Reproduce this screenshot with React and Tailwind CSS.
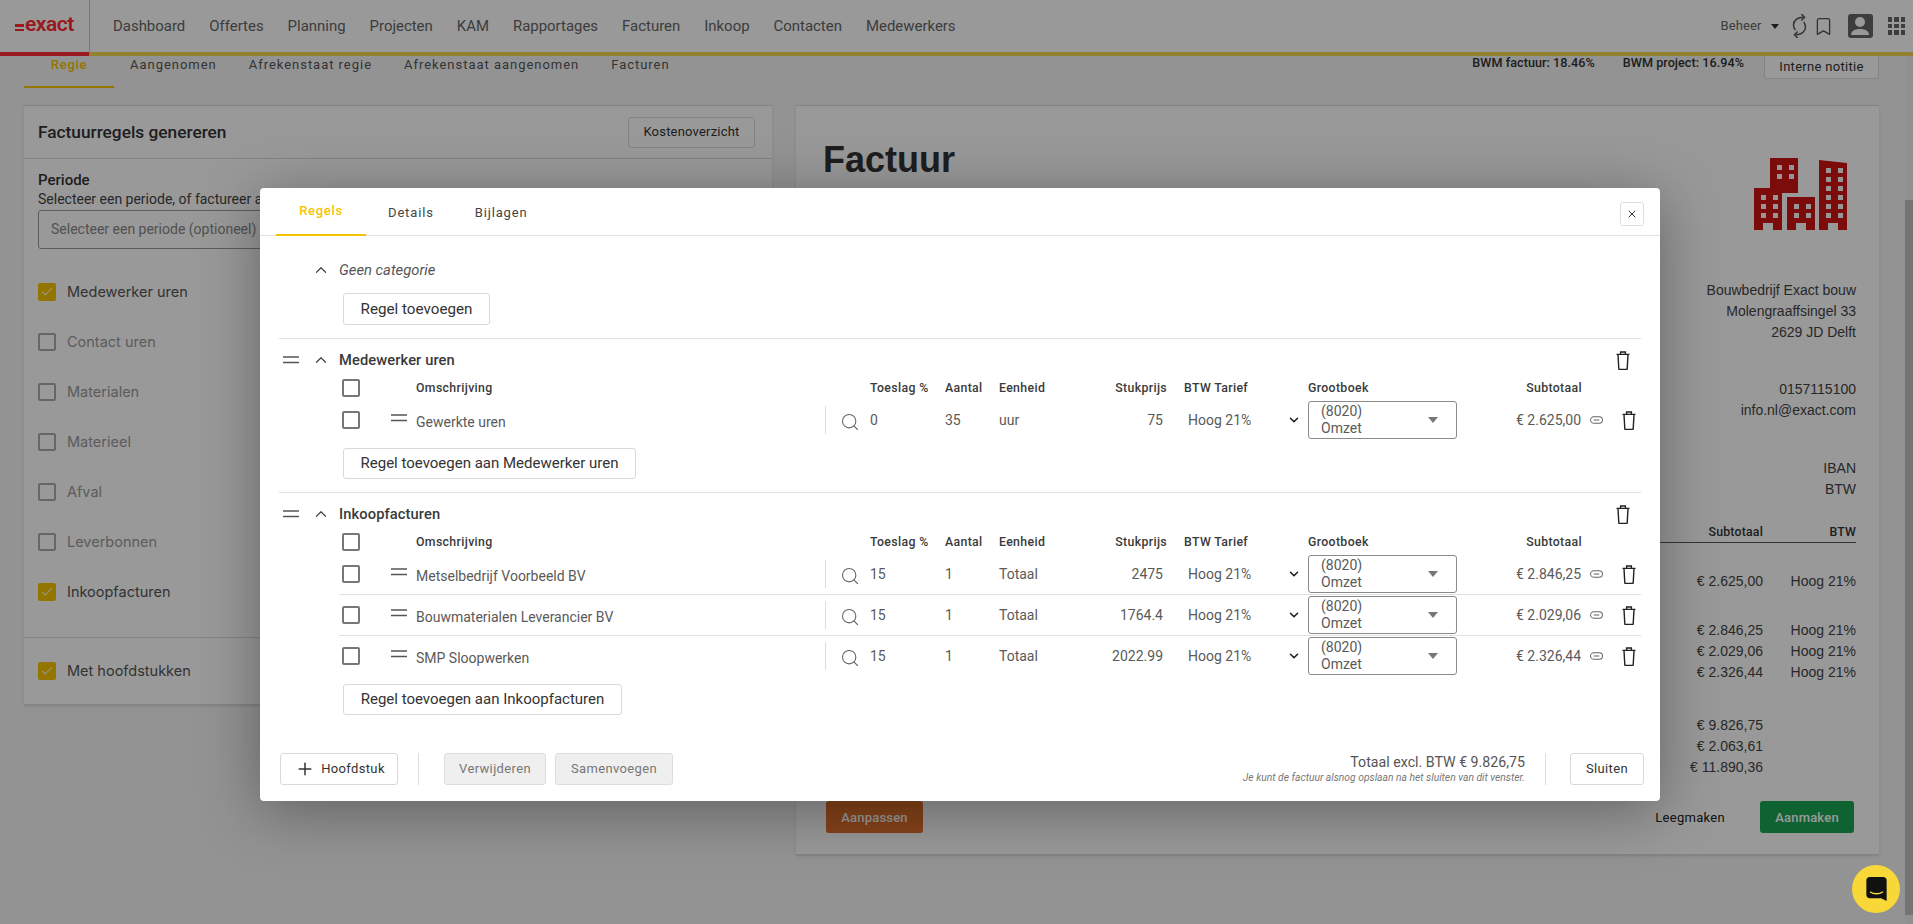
import React from 'react';
import { Search, ChevronUp, ChevronDown, Plus, Bookmark, Check, X } from 'lucide-react';

const Drag = ({ className = '' }) => (
  <svg viewBox="0 0 16 8" className={`w-4 h-2 ${className}`}><path d="M0 1h16M0 6.500h16" stroke="#555" strokeWidth="1.7" fill="none" /></svg>
);
const Trash = ({ className = '' }) => (
  <svg viewBox="0 0 14 19" className={`w-[14px] h-[19px] ${className}`} fill="none" stroke="#222" strokeWidth="1.4">
    <path d="M0.500 3.400h13M4.600 3.200V1h4.800v2.200M2 3.600l0.800 14.200c0 .4.300.7.700.7h7c.4 0 .7-.3.700-.7L12 3.600" />
  </svg>
);
const LinkIcon = () => (
  <svg viewBox="0 0 14 8" className="w-[13px] h-2" fill="none" stroke="#666" strokeWidth="1.1">
    <rect x="0.600" y="0.600" width="12.800" height="6.800" rx="3.400" /><path d="M4 4h6" />
  </svg>
);
const Caret = () => (
  <svg viewBox="0 0 10 6" className="w-[10px] h-[6px]"><path d="M0 0h10L5 6z" fill="#777" /></svg>
);
const Cb = ({ checked, dim }) => (
  checked ? (
    <span className="w-[18px] h-[18px] rounded-[2px] bg-[#f5c400] flex items-center justify-center shrink-0"><Check size={14} color="#fff" strokeWidth={1.8} /></span>
  ) : (
    <span className={`w-[18px] h-[18px] rounded-[2px] border-2 shrink-0 ${dim ? 'border-[#aaa]' : 'border-[#777]'}`} />
  )
);
const RowCb = () => <span className="block ml-[3px] w-[18px] h-[18px] rounded-[2px] border-2 border-[#777]" />;

const Btn = ({ children, className = '' }) => (
  <button className={`h-[31px] border border-[#d9d9d9] rounded-[3px] bg-white text-[#333] flex items-center justify-center ${className}`}>{children}</button>
);

const GRID = 'grid grid-cols-[52px_25px_409px_45px_75px_54px_53px_115px_141px_149px_125px_59px] items-center';

const Header = () => (
  <div className={`${GRID} h-6 mt-[3px] text-[12.3px] font-medium tracking-[0.35px] text-[#3a3a3a] ml-[60px]`}>
    <RowCb />
    <span />
    <span>Omschrijving</span>
    <span />
    <span>Toeslag %</span>
    <span>Aantal</span>
    <span>Eenheid</span>
    <span className="text-right">Stukprijs</span>
    <span className="pl-[17px]">BTW Tarief</span>
    <span>Grootboek</span>
    <span className="text-right">Subtotaal</span>
    <span />
  </div>
);

const Row = ({ name, toeslag, aantal, eenheid, prijs, sub, last }) => (
  <div className={`${GRID} ml-[60px] text-[14px] text-[#5a5a5a] ${last ? 'h-10' : 'h-[41px] border-b border-[#e0e0e0]'}`}>
    <RowCb />
    <Drag className="-mt-1" />
    <span className="mt-1">{name}</span>
    <span className="h-7 border-l border-[#ddd] flex items-center pl-[14px]"><Search size={20} strokeWidth={1.3} color="#666" className="mt-1" /></span>
    <span>{toeslag}</span>
    <span>{aantal}</span>
    <span>{eenheid}</span>
    <span className="text-right pr-1">{prijs}</span>
    <span className="pl-[21px] pr-[7px] flex items-center justify-between">Hoog 21%<ChevronDown size={14} strokeWidth={2.8} color="#222" /></span>
    <span className="h-[38px] border border-[#8a8a8a] rounded-[3px] pl-3 pr-[18px] flex items-center justify-between leading-[17px]"><span className="block w-12">(8020) Omzet</span><Caret /></span>
    <span className="text-right pr-px">{sub}</span>
    <span className="flex items-center justify-between pl-2 pr-[5px]"><LinkIcon /><Trash /></span>
  </div>
);

const Section = ({ title, rows, addLabel, w }) => (
  <div className="border-t border-[#e0e0e0] pt-2 pb-[13px]">
    <div className="h-[26px] flex items-center text-[14.7px] font-medium text-[#3a3a3a] tracking-[0.1px]">
      <Drag className="ml-1" />
      <ChevronUp size={18} strokeWidth={1.6} color="#444" className="ml-[13px] mr-[9px]" />
      <span className="flex-1">{title}</span>
      <Trash className="mr-[11px] h-4 w-3" />
    </div>
    <Header />
    {rows.map((r, i) => <Row key={i} {...r} last={i === rows.length - 1} />)}
    <Btn className={`mt-2 ml-[64px] text-[15px] ${w}`}>{addLabel}</Btn>
  </div>
);

const NAV = ['Dashboard', 'Offertes', 'Planning', 'Projecten', 'KAM', 'Rapportages', 'Facturen', 'Inkoop', 'Contacten', 'Medewerkers'];
const LEFT = [['Medewerker uren', true], ['Contact uren'], ['Materialen'], ['Materieel'], ['Afval'], ['Leverbonnen'], ['Inkoopfacturen', true]];

const Building = () => (
  <svg viewBox="0 0 93 73" className="w-[93px] h-[73px] mr-[9px] mt-5">
    <path d="M16 0h28v35H28V30H16zM0 30h28v42h-9v-7h-10v7H0zM33 39h28v33h-9v-7H42v7h-9zM65 2l28 3v67h-9v-7H74v7h-9z" fill="#cf1414" />
    <g fill="#fbfbfb">
      {[[23, 7], [35, 7], [23, 16], [35, 16]].map(([x, y]) => <rect key={`a${x}${y}`} x={x} y={y} width="5" height="5" />)}
      {[7, 19].flatMap(x => [37, 46, 55].map(y => <rect key={`b${x}${y}`} x={x} y={y} width="5" height="5" />))}
      {[40, 52].flatMap(x => [46, 55].map(y => <rect key={`c${x}${y}`} x={x} y={y} width="5" height="5" />))}
      {[72, 84].flatMap(x => [10, 19, 28, 37, 46, 55].map(y => <rect key={`d${x}${y}`} x={x} y={y} width="5" height="5" />))}
    </g>
  </svg>
);

export default function App() {
  return (
    <div className="relative h-[924px] w-full overflow-hidden bg-[#f5f5f5] font-['Roboto',sans-serif] text-[#333]">
      {/* Nav */}
      <header className="h-[56px] bg-white flex border-b-4 border-[#f5d750]">
        <div className="w-[89px] h-[56px] -mb-1 border-b-4 border-[#ff2b32] flex items-center pl-[15px] relative">
          <span className="flex flex-col gap-[2px] mr-[1px] mt-[3px]"><i className="block w-[9px] h-[2.500px] bg-[#ff2b32]" /><i className="block w-[9px] h-[2.500px] bg-[#ff2b32]" /></span>
          <span className="font-semibold text-[21px] tracking-[-0.5px] text-[#ff2b32] leading-none -mt-[3px]">exact</span>
        </div>
        <div className="h-[52px] border-l border-[#ccc]" />
        <nav className="flex items-center gap-6 pl-[23px] text-[14.95px] text-[#666] flex-1">
          {NAV.map(n => <span key={n}>{n}</span>)}
        </nav>
        <div className="flex items-center text-[#666] pr-2 h-[52px]">
          <span className="text-[13px] tracking-[0.1px]">Beheer</span>
          <span className="ml-[9px] w-0 h-0 border-x-4 border-x-transparent border-t-[5px] border-t-[#333]" />
          <svg viewBox="0 0 16 26" className="ml-[13px] w-[15px] h-[24px]" fill="none" stroke="#555" strokeWidth="1.600">
            <path d="M12 3.500C6 3.500 1.500 7 1.500 12c0 2.200.8 4 2 5.500M4 22.500c6 0 10.500-3.500 10.500-8.500 0-2.200-.8-4-2-5.500" />
            <path d="M10 0l3.500 3.500L10 7M6 19l-3.500 3.500L6 26" />
          </svg>
          <Bookmark size={21} strokeWidth={1.5} color="#555" className="ml-[6px]" />
          <span className="ml-[14px] w-[25px] h-6 rounded-[3px] bg-[#666] flex items-end justify-center overflow-hidden">
            <svg viewBox="0 0 24 24" className="w-6 h-6"><circle cx="12" cy="8" r="5" fill="#fff" /><path d="M3 21c0-4 4-6 9-6s9 2 9 6z" fill="#fff" /></svg>
          </span>
          <span className="ml-[15px] grid grid-cols-3 gap-[2px]">
            {Array.from({ length: 9 }).map((_, i) => <i key={i} className="block w-[4.500px] h-[4.500px] bg-[#666]" />)}
          </span>
        </div>
      </header>

      <div className="flex h-[868px]">
        <main className="flex-1 px-6 overflow-hidden">
          {/* Subnav */}
          <div className="h-[49px] flex items-start pr-[2px]">
            <div className="h-[32px] w-[90px] border-b-2 border-[#f5c400] flex justify-center text-[13px] font-medium tracking-[0.7px] text-[#f5c400] leading-[18px]">Regie</div>
            <div className="flex gap-[32px] pl-4 text-[13px] tracking-[0.97px] text-[#555] leading-[18px]">
              <span>Aangenomen</span><span>Afrekenstaat regie</span><span>Afrekenstaat aangenomen</span><span>Facturen</span>
            </div>
            <div className="ml-auto flex items-start text-[12.6px] font-medium tracking-[0.05px] text-[#333] leading-[14px]">
              <span>BWM factuur: 18.46%</span>
              <span className="ml-7">BWM project: 16.94%</span>
              <span className="ml-5 w-[115px] h-[23px] border border-t-0 border-[#ddd] rounded-b-[3px] bg-white flex items-center justify-center text-[13px] font-normal tracking-[0.3px]">Interne notitie</span>
            </div>
          </div>

          <div className="flex gap-6 items-start">
            {/* Left card */}
            <section className="w-[748px] h-[600px] bg-white border-t border-[#ddd] border-b shadow-sm">
              <div className="h-[53px] flex items-center justify-between pl-[14px] pr-[17px] border-b border-[#ddd]">
                <h2 className="text-[17.3px] font-medium mt-[2px]">Factuurregels genereren</h2>
                <button className="w-[127px] h-[31px] border border-[#ddd] rounded-[3px] text-[13px] tracking-[0.2px]">Kostenoverzicht</button>
              </div>
              <div className="px-[14px] pt-[12px]">
                <div className="text-[15px] font-medium leading-[19px]">Periode</div>
                <div className="text-[14px] leading-[19px] text-[#444]">Selecteer een periode, of factureer alle regels</div>
                <div className="mt-[1px] h-[39px] border border-[#999] rounded-[3px] flex items-center pl-3 text-[14px] text-[#888]">Selecteer een periode (optioneel)</div>
                <div className="mt-[34px] flex flex-col gap-8">
                  {LEFT.map(([t, c]) => (
                    <div key={t} className={`flex items-center gap-[11px] h-[18px] text-[14.5px] font-['Inter',sans-serif] ${c ? 'text-[#555]' : 'text-[#999]'}`}><Cb checked={c} dim />{t}</div>
                  ))}
                </div>
              </div>
              <div className="mt-[36px] border-t border-[#ddd] pt-[24px] pl-[14px]">
                <div className="flex items-center gap-[11px] h-[18px] text-[14.5px] font-['Inter',sans-serif] text-[#555]"><Cb checked />Met hoofdstukken</div>
              </div>
            </section>

            {/* Right card */}
            <section className="w-[1083px] h-[750px] bg-white border-t border-b border-[#ddd] shadow-sm pl-[27px] pr-[23px] font-['Liberation_Sans',sans-serif] text-[14px] text-[#444] leading-[21px] flex flex-col">
              <div className="flex justify-between items-start pt-[32px]">
                <h1 className="text-[36px] font-bold leading-[44px] text-[#333]">Factuur</h1>
                <Building />
              </div>
              <div className="text-right mt-[49px]">
                <p>Bouwbedrijf Exact bouw</p><p>Molengraaffsingel 33</p><p>2629 JD Delft</p>
                <p className="mt-[36px]">0157115100</p><p>info.nl@exact.com</p>
                <p className="mt-[37px]">IBAN</p><p>BTW</p>
              </div>
              <div className="mt-[22px] flex border-b border-[#555] h-[21px] text-[12.3px] font-medium tracking-[0.2px] font-['Roboto',sans-serif] text-[#333] justify-end">
                <span>Subtotaal</span><span className="w-[93px] text-right">BTW</span>
              </div>
              <div className="mt-[28px] flex justify-end"><span>€ 2.625,00</span><span className="w-[93px] text-right">Hoog 21%</span></div>
              <div className="mt-[28px] flex justify-end"><span>€ 2.846,25</span><span className="w-[93px] text-right">Hoog 21%</span></div>
              <div className="flex justify-end"><span>€ 2.029,06</span><span className="w-[93px] text-right">Hoog 21%</span></div>
              <div className="flex justify-end"><span>€ 2.326,44</span><span className="w-[93px] text-right">Hoog 21%</span></div>
              <div className="mt-[32px] flex justify-end pr-[93px]">€ 9.826,75</div>
              <div className="flex justify-end pr-[93px]">€ 2.063,61</div>
              <div className="flex justify-end pr-[93px]">€ 11.890,36</div>
              <div className="mt-[23px] flex items-center font-['Roboto',sans-serif] text-[13px]">
                <button className="w-[97px] h-8 rounded-[3px] bg-[#e0702a] text-white tracking-[0.2px] font-medium ml-[3px]">Aanpassen</button>
                <span className="ml-auto tracking-[0.3px] text-[#222]">Leegmaken</span>
                <button className="ml-[35px] w-[94px] h-8 rounded-[3px] bg-[#1aa552] text-white tracking-[0.2px] font-medium mr-[2px]">Aanmaken</button>
              </div>
            </section>
          </div>
        </main>
        {/* Scrollbar */}
        <div className="w-2 bg-[#f1f1f1] flex flex-col pt-[144px]"><div className="h-[715px] bg-[#c1c1c1]" /></div>
      </div>

      {/* Overlay */}
      <div className="absolute inset-0 bg-black/40 pt-[188px] pl-[260px]">
        <div className="w-[1400px] h-[613px] bg-white rounded-[4px] shadow-[0_10px_60px_rgba(0,0,0,0.35)] flex flex-col">
          {/* Tabs */}
          <div className="h-[48px] flex items-end border-b border-[#e0e0e0] pl-4 relative shrink-0">
            <div className="w-[90px] h-[48px] border-b-2 border-[#f5c400] -mb-px flex items-center justify-center text-[13px] font-medium tracking-[0.7px] text-[#f5c400]">Regels</div>
            <div className="h-[47px] pt-[2px] flex items-center gap-[41px] pl-[22px] text-[13px] tracking-[0.85px] text-[#444]"><span>Details</span><span>Bijlagen</span></div>
            <button className="ml-auto mr-[16px] mb-[9px] w-6 h-6 border border-[#ddd] rounded-[3px] flex items-center justify-center"><X size={12} color="#333" strokeWidth={2} /></button>
          </div>

          <div className="flex-1 px-[19px]">
            <div className="h-[32px] flex items-center mt-[18px] -mb-px text-[14.8px] italic text-[#555]">
              <ChevronUp size={18} strokeWidth={1.6} color="#444" className="ml-[33px] mr-[9px]" />Geen categorie
            </div>
            <Btn className="mt-[8px] ml-[64px] w-[147px] h-[32px] text-[15.2px]">Regel toevoegen</Btn>
            <div className="h-[13px]" />
            <Section
              title="Medewerker uren"
              addLabel="Regel toevoegen aan Medewerker uren"
              w="w-[293px]"
              rows={[{ name: 'Gewerkte uren', toeslag: '0', aantal: '35', eenheid: 'uur', prijs: '75', sub: '€ 2.625,00' }]}
            />
            <Section
              title="Inkoopfacturen"
              addLabel="Regel toevoegen aan Inkoopfacturen"
              w="w-[279px]"
              rows={[
                { name: 'Metselbedrijf Voorbeeld BV', toeslag: '15', aantal: '1', eenheid: 'Totaal', prijs: '2475', sub: '€ 2.846,25' },
                { name: 'Bouwmaterialen Leverancier BV', toeslag: '15', aantal: '1', eenheid: 'Totaal', prijs: '1764.4', sub: '€ 2.029,06' },
                { name: 'SMP Sloopwerken', toeslag: '15', aantal: '1', eenheid: 'Totaal', prijs: '2022.99', sub: '€ 2.326,44' },
              ]}
            />
          </div>

          {/* Footer */}
          <div className="h-[48px] shrink-0 flex items-start pl-[20px] pr-[16px]">
            <button className="w-[118px] h-8 border border-[#d9d9d9] rounded-[3px] flex items-center justify-center text-[13px] tracking-[0.35px] text-[#333] pl-[2px]"><Plus size={20} strokeWidth={1.8} className="mr-[6px]" />Hoofdstuk</button>
            <span className="h-8 border-l border-[#ddd] ml-5" />
            <button className="ml-[25px] w-[102px] h-8 border border-[#ddd] rounded-[3px] bg-[#efefef] text-[13px] tracking-[0.35px] text-[#777]">Verwijderen</button>
            <button className="ml-[9px] w-[118px] h-8 border border-[#ddd] rounded-[3px] bg-[#efefef] text-[13px] tracking-[0.35px] text-[#777]">Samenvoegen</button>
            <div className="ml-auto text-right">
              <div className="text-[14.2px] leading-[18px] text-[#555]">Totaal excl. BTW € 9.826,75</div>
              <div className="text-[10.3px] leading-[13px] italic text-[#777]">Je kunt de factuur alsnog opslaan na het sluiten van dit venster.</div>
            </div>
            <span className="h-8 border-l border-[#ddd] ml-5" />
            <button className="ml-[24px] w-[74px] h-8 border border-[#d9d9d9] rounded-[3px] text-[13px] tracking-[0.35px] text-[#333]">Sluiten</button>
          </div>
        </div>
      </div>

      {/* Chat */}
      <button className="absolute right-[13px] bottom-[11px] w-12 h-12 rounded-full bg-[#f7d838] flex items-center justify-center">
        <svg viewBox="0 0 22 26" className="w-[21px] h-6">
          <path d="M4 0h14a4 4 0 0 1 4 4v22l-6-3H4a4 4 0 0 1-4-4V4a4 4 0 0 1 4-4z" fill="#111" />
          <path d="M4 16c4 3 10 3 14 0" stroke="#f7d838" strokeWidth="1.6" fill="none" />
        </svg>
      </button>
    </div>
  );
}
